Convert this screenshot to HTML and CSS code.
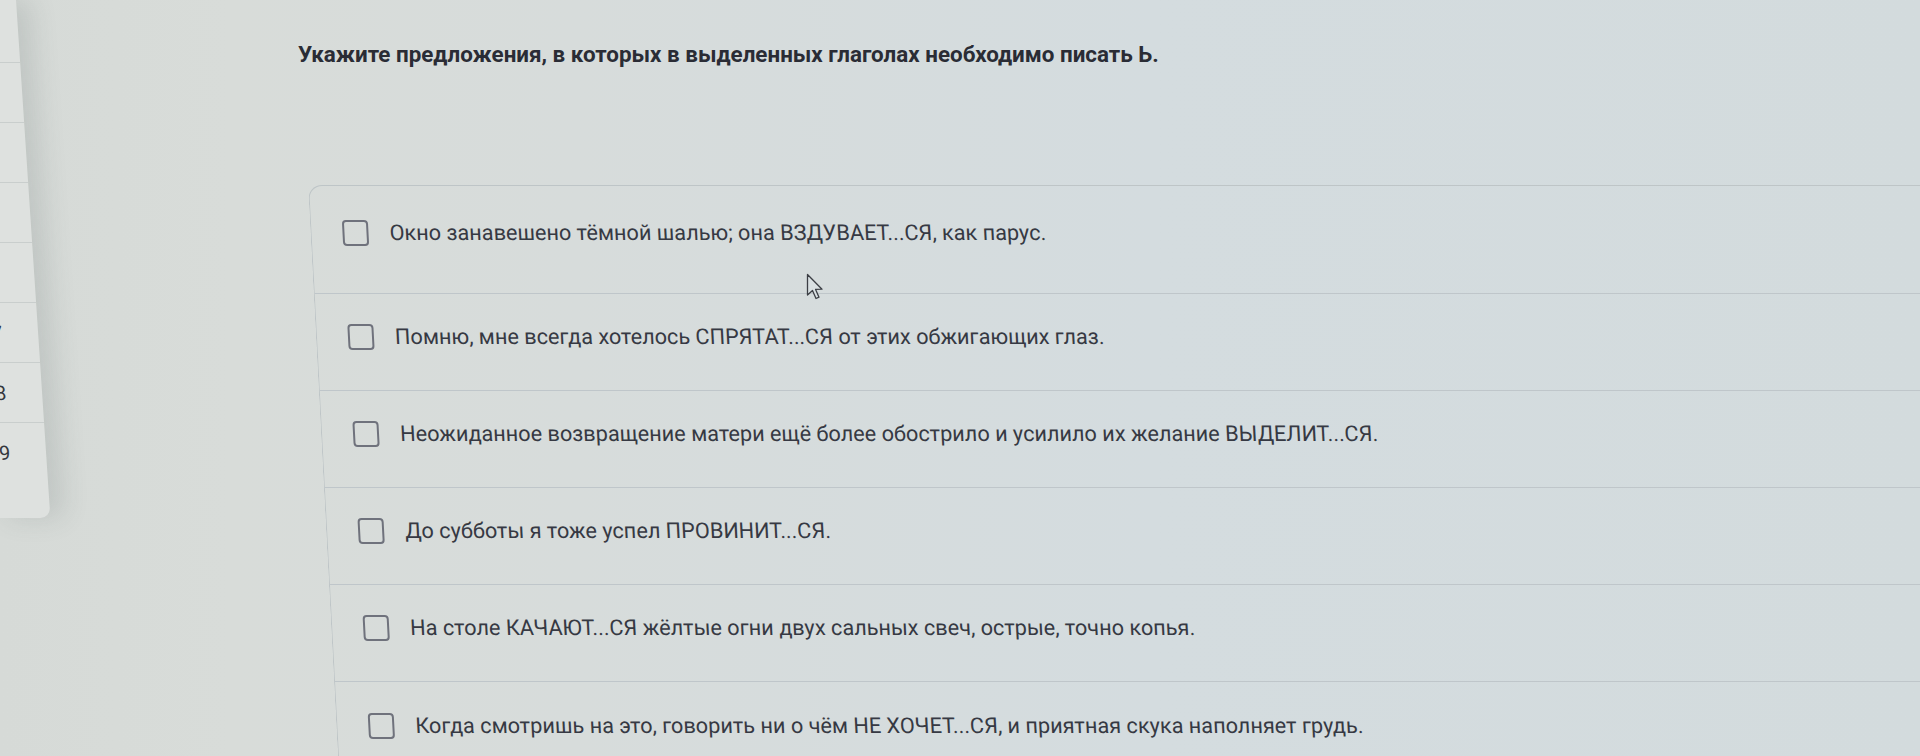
FILE: index.html
```html
<!DOCTYPE html>
<html lang="ru">
<head>
<meta charset="utf-8">
<title>Задание</title>
<link rel="stylesheet" href="styles.css">
</head>
<body>
<div class="screen">
  <aside class="sidebar">
    <ul class="nums">
      <li class="num-row"><span class="num">2</span></li>
      <li class="num-row"><span class="num">3</span></li>
      <li class="num-row"><span class="num">4</span></li>
      <li class="num-row"><span class="num">5</span></li>
      <li class="num-row"><span class="num">6</span></li>
      <li class="num-row"><span class="num">7</span></li>
      <li class="num-row"><span class="num">8</span></li>
      <li class="num-row"><span class="num">9</span></li>
    </ul>
  </aside>
  <main class="main">
    <h1 class="question">Укажите предложения, в которых в выделенных глаголах необходимо писать Ь.</h1>
    <div class="card">
      <label class="option first"><span class="box"></span><span class="text">Окно занавешено тёмной шалью; она ВЗДУВАЕТ...СЯ, как парус.</span></label>
      <label class="option"><span class="box"></span><span class="text">Помню, мне всегда хотелось СПРЯТАТ...СЯ от этих обжигающих глаз.</span></label>
      <label class="option"><span class="box"></span><span class="text">Неожиданное возвращение матери ещё более обострило и усилило их желание ВЫДЕЛИТ...СЯ.</span></label>
      <label class="option"><span class="box"></span><span class="text">До субботы я тоже успел ПРОВИНИТ...СЯ.</span></label>
      <label class="option"><span class="box"></span><span class="text">На столе КАЧАЮТ...СЯ жёлтые огни двух сальных свеч, острые, точно копья.</span></label>
      <label class="option last"><span class="box"></span><span class="text">Когда смотришь на это, говорить ни о чём НЕ ХОЧЕТ...СЯ, и приятная скука наполняет грудь.</span></label>
    </div>
  </main>
  <svg class="cursor" width="18" height="28" viewBox="0 0 18 28" aria-hidden="true">
    <path d="M1.5 1.5 L1.5 22 L6.5 17.5 L10 25.5 L13 24.2 L9.6 16.4 L16 16.2 Z" fill="#d9e0e2" stroke="#3c3f45" stroke-width="1.3" stroke-linejoin="round"/>
  </svg>
</div>
</body>
</html>
```

FILE: styles.css
```css
* { box-sizing: border-box; }

html, body {
  margin: 0;
  padding: 0;
  height: 100%;
  overflow: hidden;
}

body {
  font-family: Roboto, "Liberation Sans", Arial, sans-serif;
  background: linear-gradient(90deg, #d6dad7 0%, #d8dcd9 12%, #d7dcdb 30%, #d4dcdf 60%, #d3dbdd 100%);
  color: #3a3d46;
}

.screen {
  position: relative;
  display: flex;
  height: 756px;
  overflow: hidden;
}

.sidebar {
  flex: 0 0 56px;
  margin-left: -40px;
  height: 518px;
  background: #dee1df;
  border-bottom-right-radius: 10px;
  box-shadow: 14px 0 26px rgba(80, 92, 92, 0.16);
  overflow: hidden;
  transform: skewX(3.8deg);
  transform-origin: top left;
}

.nums {
  list-style: none;
  margin: 3px 0 0 0;
  padding: 0;
}

.num-row {
  height: 60px;
  border-bottom: 1px solid #c9cecd;
  display: flex;
  align-items: center;
  padding-left: 9px;
}

.num-row:last-child { border-bottom: none; }

.num {
  font-size: 20px;
  color: #34373d;
}

.main {
  flex: 1;
  padding-left: 282px;
  min-width: 0;
}

.question {
  margin: 40px 0 0 0;
  font-size: 22.4px;
  line-height: 28px;
  font-weight: 700;
  color: #2a2c35;
  white-space: nowrap;
}

.card {
  margin: 117px 0 0 10px;
  border-top: 1px solid #bec5c7;
  border-left: 1px solid #bec5c7;
  border-top-left-radius: 14px;
  transform: skewX(3deg);
  transform-origin: top left;
}

.option {
  display: flex;
  align-items: center;
  height: 97px;
  padding: 0 0 10px 31px;
  border-bottom: 1px solid #bfc6ca;
}

.option.first {
  height: 108px;
  padding-bottom: 14px;
}

.option.last {
  border-bottom: none;
}

.box {
  flex: 0 0 26px;
  width: 26px;
  height: 26px;
  border: 2.5px solid #6f727c;
  border-radius: 4px;
  margin-right: 21px;
}

.text {
  font-size: 21.7px;
  line-height: 26px;
  color: #363943;
  white-space: nowrap;
}

.cursor {
  position: absolute;
  left: 806px;
  top: 273px;
}
```
